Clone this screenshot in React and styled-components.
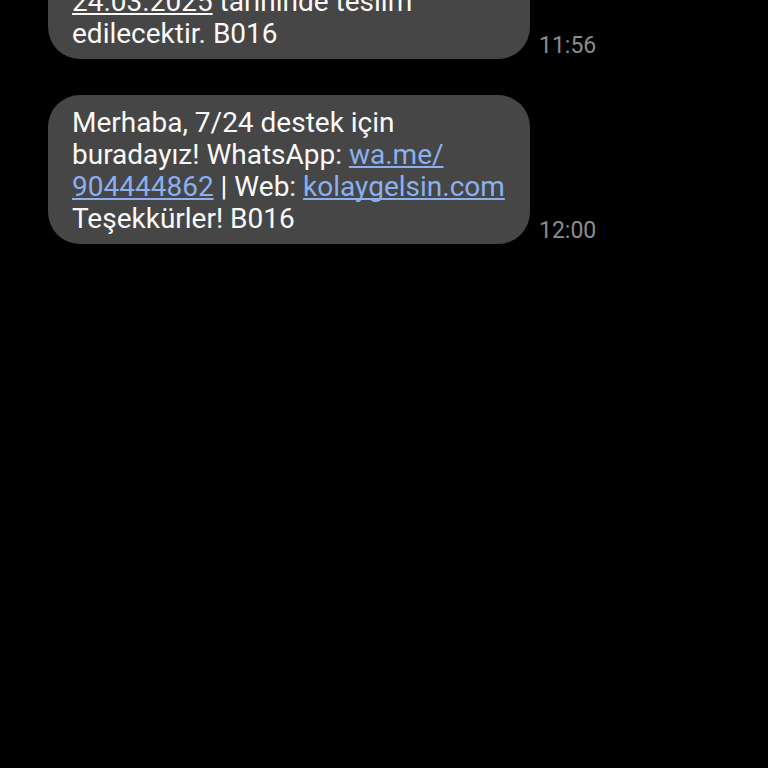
import styled, { createGlobalStyle } from "styled-components";

const messages = [
  {
    id: 1,
    time: "11:56",
    clipped: true,
    lines: [
      [{ text: "24.03.2025", date: true }, { text: " tarihinde teslim" }],
      [{ text: "edilecektir. B016" }],
    ],
  },
  {
    id: 2,
    time: "12:00",
    lines: [
      [{ text: "Merhaba, 7/24 destek için" }],
      [
        { text: "buradayız! WhatsApp: " },
        { text: "wa.me/", href: "https://wa.me/904444862" },
      ],
      [
        { text: "904444862", href: "https://wa.me/904444862" },
        { text: " | Web: " },
        { text: "kolaygelsin.com", href: "https://kolaygelsin.com" },
      ],
      [{ text: "Teşekkürler! B016" }],
    ],
  },
];

const MessagePart = ({ part }) => {
  if (part.href) {
    return <MessageLink href={part.href}>{part.text}</MessageLink>;
  }
  if (part.date) {
    return <DateLink href="#calendar">{part.text}</DateLink>;
  }
  return part.text;
};

const Message = ({ message: { lines, time, clipped } }) => {
  return (
    <MessageRow>
      <Bubble $clipped={clipped}>
        {lines.map((line, i) => (
          <Line key={i}>
            {line.map((part, j) => (
              <MessagePart key={j} part={part} />
            ))}
          </Line>
        ))}
      </Bubble>
      <Time>{time}</Time>
    </MessageRow>
  );
};

const App = () => {
  return (
    <>
      <GlobalStyle />
      <Conversation>
        {messages.map((message) => (
          <Message key={message.id} message={message} />
        ))}
      </Conversation>
    </>
  );
};

// styled-components
const GlobalStyle = createGlobalStyle`
  * {
    box-sizing: border-box;
  }
  body {
    margin: 0;
    background-color: #000000;
    font-family: Roboto, "Liberation Sans", sans-serif;
  }
`;
const Conversation = styled.main`
  min-height: 100vh;
  padding: 0 48px;
  display: flex;
  flex-direction: column;
  gap: 36px;
  overflow: hidden;
`;
const MessageRow = styled.div`
  display: flex;
  align-items: flex-end;
  gap: 9px;
`;
// clipped: the message is scrolled partly above the top edge
const Bubble = styled.div`
  width: 100%;
  max-width: 482px;
  margin-top: ${({ $clipped }) => ($clipped ? "-14px" : "0")};
  padding: ${({ $clipped }) => ($clipped ? "0 24px 9px" : "12px 24px 9px")};
  border-radius: ${({ $clipped }) => ($clipped ? "0 0 32px 32px" : "32px")};
  background-color: #464646;
  color: #fafafa;
  font-size: 28px;
  line-height: 32px;
`;
const Line = styled.div`
  white-space: nowrap;
`;
const MessageLink = styled.a`
  color: #8ab0f0;
  text-decoration: underline;
  text-decoration-thickness: 2px;
  text-underline-offset: 2px;
  text-decoration-skip-ink: none;
`;
const DateLink = styled(MessageLink)`
  color: inherit;
`;
const Time = styled.time`
  color: #8c8c8c;
  font-size: 23px;
  line-height: 26px;
`;

export default App;
